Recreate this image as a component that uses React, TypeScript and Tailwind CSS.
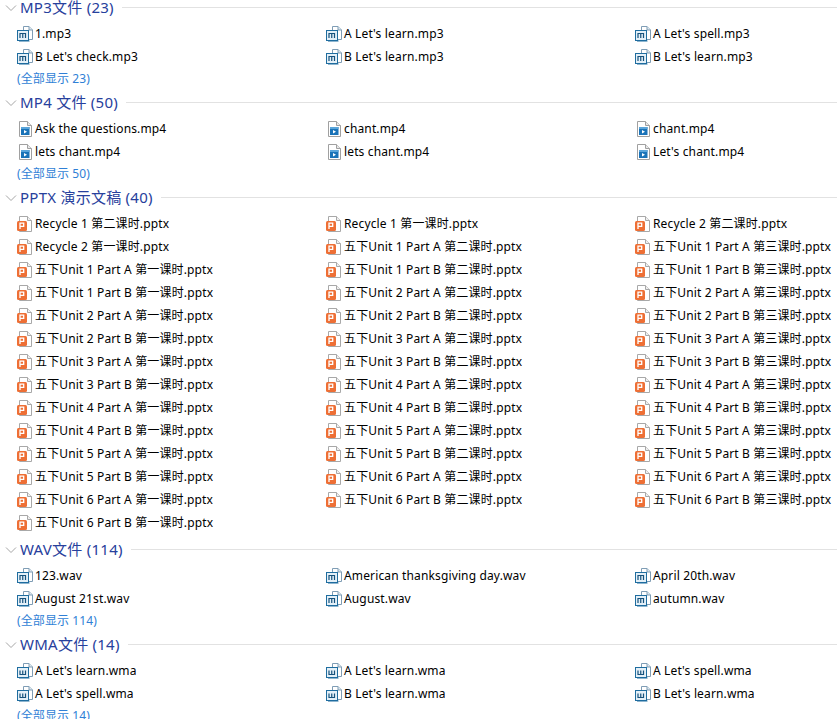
import React from "react";

type Kind = "audio" | "wma" | "video" | "ppt";

type Group = {
  title: string;
  kind: Kind;
  more?: number;
  files: string[];
};

const pptFiles = () => {
  const out: string[] = [
    "Recycle 1 第二课时.pptx",
    "Recycle 1 第一课时.pptx",
    "Recycle 2 第二课时.pptx",
    "Recycle 2 第一课时.pptx",
  ];
  for (let u = 1; u <= 6; u++) {
    for (const p of ["A", "B"]) {
      for (const n of ["第二", "第三", "第一"]) {
        out.push(`五下Unit ${u} Part ${p} ${n}课时.pptx`);
      }
    }
  }
  return out;
};

const groups: Group[] = [
  {
    title: "MP3文件 (23)",
    kind: "audio",
    more: 23,
    files: ["1.mp3", "A Let's learn.mp3", "A Let's spell.mp3", "B Let's check.mp3", "B Let's learn.mp3", "B Let's learn.mp3"],
  },
  {
    title: "MP4 文件 (50)",
    kind: "video",
    more: 50,
    files: ["Ask the questions.mp4", "chant.mp4", "chant.mp4", "lets chant.mp4", "lets chant.mp4", "Let's chant.mp4"],
  },
  { title: "PPTX 演示文稿 (40)", kind: "ppt", files: pptFiles() },
  {
    title: "WAV文件 (114)",
    kind: "audio",
    more: 114,
    files: ["123.wav", "American thanksgiving day.wav", "April 20th.wav", "August 21st.wav", "August.wav", "autumn.wav"],
  },
  {
    title: "WMA文件 (14)",
    kind: "wma",
    more: 14,
    files: ["A Let's learn.wma", "A Let's learn.wma", "A Let's spell.wma", "A Let's spell.wma", "B Let's learn.wma", "B Let's learn.wma"],
  },
];

function FileIcon({ kind }: { kind: Kind }) {
  if (kind === "video") {
    return (
      <svg width="16" height="16" viewBox="0 0 16 16" className="shrink-0 ml-[2px]">
        <path d="M.5.5h8l4 4v11h-12z" fill="#fff" stroke="#a0a0a0" />
        <path d="M8.500.5v4h4" fill="#e8e8e8" stroke="#a0a0a0" />
        <rect x="2" y="6" width="8.500" height="8" fill="#1a73b8" />
        <rect x="2" y="6" width="8.500" height="2" fill="#5aa5da" />
        <path d="M5 9l3 1.700-3 1.700z" fill="#fff" />
      </svg>
    );
  }
  if (kind === "ppt") {
    return (
      <svg width="16" height="16" viewBox="0 0 16 16" className="shrink-0">
        <path d="M2.500.5h8l4 4v11h-12z" fill="#fff" stroke="#a8a8a8" />
        <path d="M10.500.5v4h4" fill="#efefef" stroke="#a8a8a8" />
        <rect x="0" y="5" width="10" height="10" rx="1.500" fill="#ee6f35" />
        <path d="M3 13V7.200h3.700v3.100H3" fill="none" stroke="#fff" strokeWidth="1.300" />
      </svg>
    );
  }
  return (
    <svg width="16" height="16" viewBox="0 0 16 16" className="shrink-0">
      <path d="M6.500.5h5.500l3.500 3.500v9.500h-9z" fill="#fff" stroke="#7f9db5" />
      <path d="M12 .5v3.500h3.500" fill="#dfe8ef" stroke="#7f9db5" />
      <rect x=".5" y="4.500" width="11" height="10" fill="#e4f0f8" stroke="#1f6d9f" />
      <rect x="2" y="14.500" width="10.500" height="1" fill="#1f6d9f" />
      {kind === "audio" ? (
        <path d="M3 12V7.500h5.500V12M5.750 7.500V12" fill="none" stroke="#17527c" strokeWidth="1.200" />
      ) : (
        <path d="M3 7.500V11.500h5.500V7.500M5.750 7.500V11.500" fill="none" stroke="#17527c" strokeWidth="1.200" />
      )}
    </svg>
  );
}

function Header({ title }: { title: string }) {
  return (
    <div className="flex items-center h-[25px]">
      <svg width="12" height="12" viewBox="0 0 12 12" className="ml-[5px] shrink-0">
        <path d="M1 3.500l5 5 5-5" fill="none" stroke="#a6a6a6" strokeWidth="1" />
      </svg>
      <span className="ml-[3px] text-[15px] tracking-[0.25px] text-[#27409c] whitespace-nowrap">{title}</span>
      <div className="ml-2 flex-1 h-px bg-[#e2e2e2]" />
    </div>
  );
}

function FileGroup({ group }: { group: Group }) {
  return (
    <section>
      <Header title={group.title} />
      <div className="mt-[2px] grid grid-cols-[309px_309px_202px] pl-[17px]">
        {group.files.map((f, i) => (
          <div key={i} className="flex items-center gap-[2px] h-[23px] whitespace-nowrap overflow-hidden">
            <FileIcon kind={group.kind} />
            <span className={group.kind === "video" ? "-ml-[2px] text-[12px] tracking-[0.14px] text-black" : "text-[12px] tracking-[0.14px] text-black"}>
              {f}
            </span>
          </div>
        ))}
      </div>
      {group.more ? (
        <div className="h-[22px] pl-[17px] text-[12px] tracking-[0.1px] leading-[22px] text-[#2f7fd6]">(全部显示 {group.more})</div>
      ) : (
        <div className="h-[3px]" />
      )}
    </section>
  );
}

export default function App() {
  return (
    <div className="w-[837px] h-[719px] overflow-hidden bg-white font-['Noto_Sans','Noto_Sans_CJK_SC',sans-serif]">
      <div className="-mt-[5px]">
        {groups.map((g, i) => (
          <FileGroup key={i} group={g} />
        ))}
      </div>
    </div>
  );
}
